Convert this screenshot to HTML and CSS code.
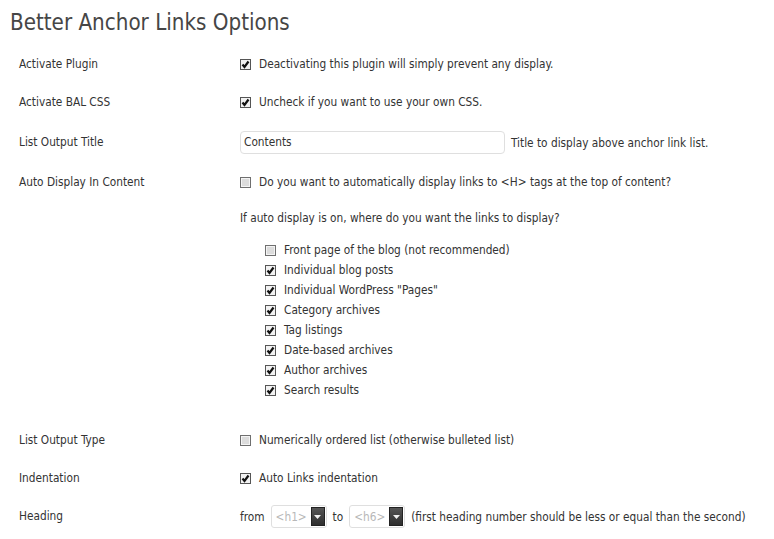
FILE: index.html
```html
<!DOCTYPE html>
<html>
<head>
<meta charset="utf-8">
<link rel="stylesheet" href="styles.css">
</head>
<body>
<div class="wrap">
  <h2 class="title">Better Anchor Links Options</h2>
  <div class="form">
    <div class="row">
      <div class="label">Activate Plugin</div>
      <div class="value"><label class="opt"><span class="cb on"><svg viewBox="0 0 9 9"><path d="M1.5 4.5 L3.5 7 L7.5 1.5"/></svg></span>Deactivating this plugin will simply prevent any display.</label></div>
    </div>
    <div class="row">
      <div class="label">Activate BAL CSS</div>
      <div class="value"><label class="opt"><span class="cb on"><svg viewBox="0 0 9 9"><path d="M1.5 4.5 L3.5 7 L7.5 1.5"/></svg></span>Uncheck if you want to use your own CSS.</label></div>
    </div>
    <div class="row row-input">
      <div class="label">List Output Title</div>
      <div class="value"><span class="input">Contents</span><span class="desc">Title to display above anchor link list.</span></div>
    </div>
    <div class="row row-auto">
      <div class="label">Auto Display In Content</div>
      <div class="value">
        <label class="opt"><span class="cb"></span>Do you want to automatically display links to &lt;H&gt; tags at the top of content?</label>
        <p class="question">If auto display is on, where do you want the links to display?</p>
        <ul class="places">
          <li><label class="opt"><span class="cb"></span>Front page of the blog (not recommended)</label></li>
          <li><label class="opt"><span class="cb on"><svg viewBox="0 0 9 9"><path d="M1.5 4.5 L3.5 7 L7.5 1.5"/></svg></span>Individual blog posts</label></li>
          <li><label class="opt"><span class="cb on"><svg viewBox="0 0 9 9"><path d="M1.5 4.5 L3.5 7 L7.5 1.5"/></svg></span>Individual WordPress "Pages"</label></li>
          <li><label class="opt"><span class="cb on"><svg viewBox="0 0 9 9"><path d="M1.5 4.5 L3.5 7 L7.5 1.5"/></svg></span>Category archives</label></li>
          <li><label class="opt"><span class="cb on"><svg viewBox="0 0 9 9"><path d="M1.5 4.5 L3.5 7 L7.5 1.5"/></svg></span>Tag listings</label></li>
          <li><label class="opt"><span class="cb on"><svg viewBox="0 0 9 9"><path d="M1.5 4.5 L3.5 7 L7.5 1.5"/></svg></span>Date-based archives</label></li>
          <li><label class="opt"><span class="cb on"><svg viewBox="0 0 9 9"><path d="M1.5 4.5 L3.5 7 L7.5 1.5"/></svg></span>Author archives</label></li>
          <li><label class="opt"><span class="cb on"><svg viewBox="0 0 9 9"><path d="M1.5 4.5 L3.5 7 L7.5 1.5"/></svg></span>Search results</label></li>
        </ul>
      </div>
    </div>
    <div class="row">
      <div class="label">List Output Type</div>
      <div class="value"><label class="opt"><span class="cb"></span>Numerically ordered list (otherwise bulleted list)</label></div>
    </div>
    <div class="row">
      <div class="label">Indentation</div>
      <div class="value"><label class="opt"><span class="cb on"><svg viewBox="0 0 9 9"><path d="M1.5 4.5 L3.5 7 L7.5 1.5"/></svg></span>Auto Links indentation</label></div>
    </div>
    <div class="row row-heading">
      <div class="label">Heading</div>
      <div class="value heading">
        <span>from</span>
        <span class="select"><span class="sel-text">&lt;h1&gt;</span><span class="sel-btn"><svg viewBox="0 0 7 4"><path d="M0 0 H7 L3.5 4 Z"/></svg></span></span>
        <span>to</span>
        <span class="select"><span class="sel-text">&lt;h6&gt;</span><span class="sel-btn"><svg viewBox="0 0 7 4"><path d="M0 0 H7 L3.5 4 Z"/></svg></span></span>
        <span>(first heading number should be less or equal than the second)</span>
      </div>
    </div>
  </div>
</div>
</body>
</html>
```
FILE: styles.css
```css
html, body {
  margin: 0;
  padding: 0;
  background: #ffffff;
}
body {
  font-family: "DejaVu Sans Condensed", "DejaVu Sans", sans-serif;
  font-size: 11.75px;
  color: #333333;
}
.wrap {
  padding: 0 10px;
}
.title {
  margin: 0;
  padding: 7px 0 8px;
  font-size: 22.2px;
  line-height: 30px;
  font-weight: normal;
  color: #464646;
}
.form {
  padding-left: 9px;
}
.row {
  display: grid;
  grid-template-columns: 221px 1fr;
  padding: 10px 0;
  line-height: 18px;
}
.label {
  color: #333;
}
.opt {
  display: flex;
  align-items: center;
  gap: 8px;
}
.cb {
  width: 9px;
  height: 9px;
  border: 1px solid #6f6f6f;
  background: #dcdcdc;
  display: inline-flex;
  flex: none;
  box-shadow: inset 0 0 0 1px #f4f4f4;
}
.cb.on {
  background: #f2f2f2;
  border-color: #555;
  box-shadow: none;
}
.cb svg {
  width: 9px;
  height: 9px;
}
.cb svg path {
  fill: none;
  stroke: #111;
  stroke-width: 2.2;
}
.row-input {
  padding: 10px 0 9px;
}
.row-input .label {
  line-height: 23px;
}
.row-input .value {
  display: flex;
  align-items: center;
  gap: 6px;
}
.input {
  width: 260px;
  height: 21px;
  line-height: 21px;
  border: 1px solid #dfdfdf;
  border-radius: 4px;
  padding: 0 0 0 3px;
  color: #333;
}
.question {
  margin: 18px 0 13px;
}
.places {
  list-style: none;
  margin: 0 0 21px;
  padding: 0 0 0 25px;
}
.places li {
  line-height: 20px;
}
.row-auto {
  padding-bottom: 0;
}
.row-heading {
  padding: 8px 0 9px;
}
.row-heading .label {
  line-height: 23px;
}
.heading {
  display: flex;
  align-items: center;
  gap: 6px;
}
.select {
  display: inline-flex;
  align-items: center;
  justify-content: space-between;
  width: 49px;
  height: 21px;
  border: 1px solid #dfdfdf;
  border-radius: 3px;
  padding: 0 1px 0 4px;
  color: #b8b8b8;
}
.sel-btn {
  width: 14px;
  height: 19px;
  background: linear-gradient(#555, #2e2e2e);
  border: 1px solid #222;
  box-sizing: border-box;
  display: inline-flex;
  align-items: center;
  justify-content: center;
}
.sel-btn svg {
  width: 7px;
  height: 4px;
}
.sel-btn svg path {
  fill: #f0f0f0;
}
```
